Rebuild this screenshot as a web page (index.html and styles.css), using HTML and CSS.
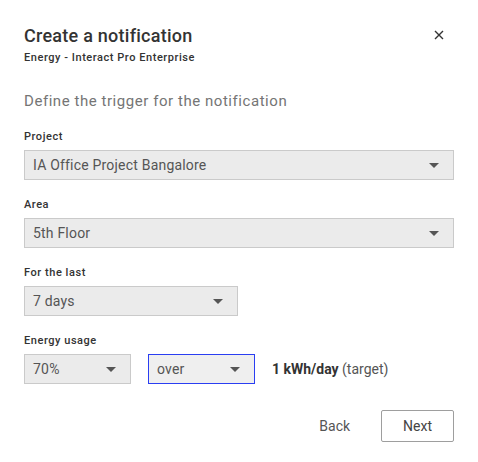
FILE: index.html
```html
<!DOCTYPE html>
<html lang="en">
<head>
    <meta charset="UTF-8">
    <meta name="viewport" content="width=device-width, initial-scale=1.0">
    <title>Create a notification</title>
    <link rel="stylesheet" href="styles.css">
</head>
<body>
    <div class="dialog">
        <header class="head">
            <div>
                <h1 class="title">Create a notification</h1>
                <div class="subtitle">Energy - Interact Pro Enterprise</div>
            </div>
            <button class="close" aria-label="Close">
                <svg width="10" height="10" viewBox="0 0 10 10">
                    <path d="M1 1L9 9M9 1L1 9" stroke="#333" stroke-width="1.4" fill="none"/>
                </svg>
            </button>
        </header>

        <p class="lead">Define the trigger for the notification</p>

        <div class="field">
            <label class="label">Project</label>
            <div class="select">
                <span>IA Office Project Bangalore</span>
                <i class="caret"></i>
            </div>
        </div>

        <div class="field">
            <label class="label">Area</label>
            <div class="select">
                <span>5th Floor</span>
                <i class="caret"></i>
            </div>
        </div>

        <div class="field">
            <label class="label">For the last</label>
            <div class="select select-md">
                <span>7 days</span>
                <i class="caret"></i>
            </div>
        </div>

        <div class="field">
            <label class="label">Energy usage</label>
            <div class="row">
                <div class="select select-sm">
                    <span>70%</span>
                    <i class="caret"></i>
                </div>
                <div class="select select-sm focused">
                    <span>over</span>
                    <i class="caret"></i>
                </div>
                <div class="target"><b>1 kWh/day</b> (target)</div>
            </div>
        </div>

        <footer class="actions">
            <button class="btn">Back</button>
            <button class="btn btn-outline">Next</button>
        </footer>
    </div>
</body>
</html>
```

FILE: styles.css
```css
body {
    margin: 0;
    background: #fff;
    font-family: Roboto, 'Noto Sans', sans-serif;
    color: #333;
}

.dialog {
    padding: 24px;
}

.head {
    display: flex;
    justify-content: space-between;
    align-items: flex-start;
}

.title {
    margin: 0;
    font-size: 18px;
    line-height: 24px;
    font-weight: 500;
    letter-spacing: 0.25px;
    color: #333;
}

.subtitle {
    margin-top: 2px;
    font-size: 11px;
    line-height: 16px;
    font-weight: 500;
    letter-spacing: 0.55px;
    color: #333;
}

.close {
    border: none;
    background: transparent;
    padding: 0;
    margin: 6px 10px 0 0;
    width: 10px;
    height: 10px;
    cursor: pointer;
    display: flex;
}

.lead {
    margin: 25px 0 18px;
    font-size: 15px;
    line-height: 20px;
    letter-spacing: 0.55px;
    color: #757575;
}

.field {
    margin-bottom: 17px;
}

.label {
    display: block;
    font-size: 11px;
    line-height: 16px;
    font-weight: 500;
    letter-spacing: 0.55px;
    color: #333;
    margin-bottom: 5px;
}

.select {
    box-sizing: border-box;
    height: 30px;
    display: flex;
    align-items: center;
    justify-content: space-between;
    padding: 0 14px 0 8px;
    background: #ebebeb;
    border: 1px solid #cacaca;
    font-size: 14px;
    letter-spacing: 0.2px;
    color: #555;
}

.select-md {
    width: 214px;
}

.select-sm {
    width: 107px;
}

.focused {
    border-color: #2a3ef2;
    background: #efefef;
}

.caret {
    width: 0;
    height: 0;
    border-left: 5px solid transparent;
    border-right: 5px solid transparent;
    border-top: 5px solid #555;
}

.row {
    display: flex;
    align-items: center;
    gap: 17px;
}

.target {
    font-size: 14px;
    color: #555;
}

.target b {
    color: #333;
    font-weight: 700;
}

.actions {
    display: flex;
    justify-content: flex-end;
    gap: 9px;
    margin-top: 26px;
}

.btn {
    height: 32px;
    padding: 0 21px;
    background: transparent;
    border: 1px solid transparent;
    border-radius: 2px;
    font-family: inherit;
    font-size: 14px;
    color: #555;
    cursor: pointer;
}

.btn-outline {
    border-color: #9e9e9e;
    color: #444;
}
```
